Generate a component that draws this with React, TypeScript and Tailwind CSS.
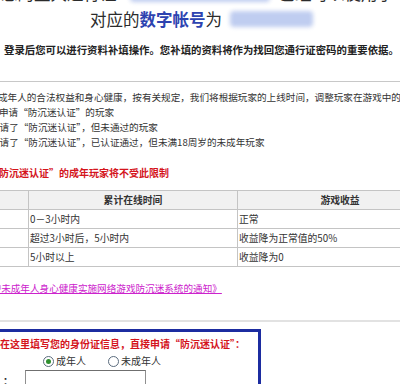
const cjk = "font-['Noto_Sans_CJK_SC','Noto_Sans',sans-serif]";

function Blur({ className }: { className: string }) {
  return <div className={`shrink-0 rounded-sm bg-[#bfcdf0] blur-[2px] ${className}`} />;
}

function Radio({ checked }: { checked?: boolean }) {
  return (
    <span className="flex h-[11px] w-[11px] shrink-0 items-center justify-center rounded-full border border-[#5a6b7d] bg-white">
      {checked && <span className="h-[5px] w-[5px] rounded-full bg-[#2f8f2f]" />}
    </span>
  );
}

export default function App() {
  return (
    <div className={`h-[384px] w-[400px] overflow-hidden bg-white text-[#2b2b2b] ${cjk}`}>
      {/* heading */}
      <div className="-mt-[17px] flex h-[20px] items-center whitespace-nowrap text-[16.5px] leading-[20px]">
        <span className="ml-[1px]">您的盛大通行证</span>
        <Blur className="ml-[13px] h-[18px] w-[140px]" />
        <span className="ml-[9px]">已经可以使用了</span>
      </div>
      <div className="mt-[6px] flex h-[20px] items-center whitespace-nowrap text-[16.5px] leading-[20px]">
        <span className="ml-[90px]">对应的</span>
        <span className="font-bold text-[#2d43b0]">数字帐号</span>
        <span>为</span>
        <Blur className="ml-[8px] h-[16px] w-[83px]" />
      </div>
      <div className="mt-[14px] ml-[4px] whitespace-nowrap text-[10.4px] font-bold leading-[14px] text-[#222]">
        登录后您可以进行资料补填操作。您补填的资料将作为找回您通行证密码的重要依据。
      </div>

      <div className="mt-[24px] h-px bg-[#c8c8c8]" />

      {/* rules */}
      <div className="mt-[8px] whitespace-nowrap text-[9.6px] leading-[15px] text-[#333]">
        <div className="-ml-[2px]">成年人的合法权益和身心健康，按有关规定，我们将根据玩家的上线时间，调整玩家在游戏中的收益</div>
        <div className="-ml-[1px]">申请“防沉迷认证”的玩家</div>
        <div className="-ml-[10px]">申请了“防沉迷认证”，但未通过的玩家</div>
        <div className="-ml-[10px]">申请了“防沉迷认证”，已认证通过，但未满18周岁的未成年玩家</div>
        <div className="mt-[15px] -ml-[11px] text-[10px] font-bold text-[#d4141c]">
          “防沉迷认证”的成年玩家将不受此限制
        </div>
      </div>

      {/* table */}
      <table className="mt-[10px] -ml-[40px] w-[483px] border-collapse text-[9.8px] leading-[18px] text-[#333]">
        <thead>
          <tr className="bg-[#f1f1f1]">
            <th className="h-[19px] w-[68px] border border-[#c4c4c4] p-0 pr-[32px] text-right font-bold">时段</th>
            <th className="w-[209px] border border-[#c4c4c4] p-0 text-center font-bold">累计在线时间</th>
            <th className="border border-[#c4c4c4] p-0 text-center font-bold">游戏收益</th>
          </tr>
        </thead>
        <tbody>
          {[
            ["0－3小时内", "正常"],
            ["超过3小时后，5小时内", "收益降为正常值的50%"],
            ["5小时以上", "收益降为0"],
          ].map(([t, r]) => (
            <tr key={t}>
              <td className="h-[19px] border border-[#c4c4c4] p-0" />
              <td className="border border-[#c4c4c4] p-0 pl-[1px]">{t}</td>
              <td className="border border-[#c4c4c4] p-0 pl-[1px]">{r}</td>
            </tr>
          ))}
        </tbody>
      </table>

      <div className="mt-[14px] -ml-[18px] whitespace-nowrap text-[9.6px] leading-[14px] text-[#cc22cc] underline">
        保护未成年人身心健康实施网络游戏防沉迷系统的通知》
      </div>

      <div className="mt-[25px] h-[2px] bg-[#e2e2e2]" />

      {/* form box */}
      <div className="mt-[7px] -ml-[20px] h-[80px] w-[281px] border-[3px] border-[#1c2ca0] bg-white">
        <div className="mt-[5px] ml-[17px] whitespace-nowrap text-[10px] font-bold leading-[14px] text-[#d4141c]">
          在这里填写您的身份证信息，直接申请“防沉迷认证”：
        </div>
        <div className="mt-[3px] flex items-center text-[10px] leading-[14px] text-[#333]">
          <span className="ml-[60px]"><Radio checked /></span>
          <span className="ml-[2px]">成年人</span>
          <span className="ml-[22px]"><Radio /></span>
          <span className="ml-[2px]">未成年人</span>
        </div>
        <div className="mt-[2px] flex items-start">
          <span className="ml-[20px] mt-[4px] text-[10px] font-bold leading-[14px]">：</span>
          <div className="ml-[12px] h-[24px] w-[121px] border border-[#8f8f8f] border-t-[#6f6f6f] bg-white" />
        </div>
      </div>
    </div>
  );
}
